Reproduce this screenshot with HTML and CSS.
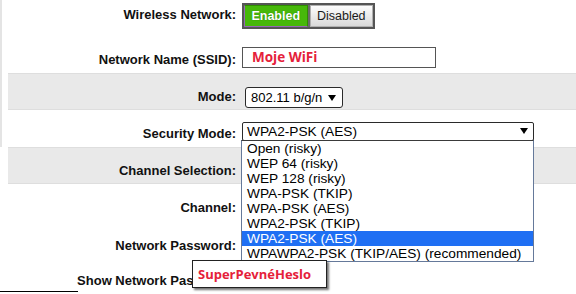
FILE: index.html
```html
<!DOCTYPE html>
<html>
<head>
    <title>Wireless Settings</title>
    <link rel="stylesheet" href="styles.css">
</head>
<body>
    <div class="settings">
        <div class="section">
            <div class="row row-first">
                <label>Wireless Network:</label>
                <div class="toggle">
                    <span class="toggle-on">Enabled</span>
                    <span class="toggle-off">Disabled</span>
                </div>
            </div>
            <div class="row">
                <label>Network Name (SSID):</label>
                <div class="text-field">Moje WiFi</div>
            </div>
            <div class="row shaded">
                <label>Mode:</label>
                <div class="select select-mode">802.11 b/g/n</div>
            </div>
            <div class="row">
                <label>Security Mode:</label>
                <div class="select select-security">
                    WPA2-PSK (AES)
                    <ul class="dropdown">
                        <li>Open (risky)</li>
                        <li>WEP 64 (risky)</li>
                        <li>WEP 128 (risky)</li>
                        <li>WPA-PSK (TKIP)</li>
                        <li>WPA-PSK (AES)</li>
                        <li>WPA2-PSK (TKIP)</li>
                        <li class="selected">WPA2-PSK (AES)</li>
                        <li>WPAWPA2-PSK (TKIP/AES) (recommended)</li>
                    </ul>
                </div>
            </div>
        </div>
        <div class="row shaded">
            <label>Channel Selection:</label>
        </div>
        <div class="row row-tall">
            <label>Channel:</label>
        </div>
        <div class="row row-tall">
            <label>Network Password:</label>
        </div>
        <div class="row row-last">
            <label>Show Network Password:</label>
            <div class="password-callout">SuperPevnéHeslo</div>
        </div>
        <div class="rule"></div>
    </div>
</body>
</html>
```

FILE: styles.css
```css
body {
    margin: 0;
    background: #fff;
    color: #111;
    font-family: "Liberation Sans", Arial, sans-serif;
    font-size: 13px;
    overflow: hidden;
}
.settings {
    width: 576px;
}
.section {
    box-shadow: inset 2px 0 #e4e4e4;
}
.row {
    position: relative;
    display: grid;
    grid-template-columns: 228px 1fr;
    column-gap: 6px;
    align-items: center;
    height: 37px;
    padding: 5px 0 0 8px;
    box-sizing: border-box;
}
.row label {
    text-align: right;
    font-weight: bold;
    padding-top: 4px;
}
.row-first {
    height: 36px;
    padding-top: 3px;
    align-items: start;
}
.row-first label {
    padding-top: 0;
    line-height: 23px;
}
.row-tall {
    height: 38px;
}
.row-last {
    height: 31px;
    padding-top: 5px;
}
.shaded {
    background: #e9e9e9;
    border-top: 1px solid #dedede;
    border-bottom: 1px solid #dedede;
    margin-left: 8px;
    padding-left: 0;
}
.shaded:first-of-type {
    height: 39px;
}
.toggle {
    display: flex;
    width: 133px;
    height: 26px;
    box-sizing: border-box;
    border: 2px solid #555;
    background: #6a6a6a;
    gap: 2px;
    font-size: 12.5px;
}
.toggle span {
    flex: 1;
    display: flex;
    align-items: center;
    justify-content: center;
}
.toggle-on {
    background: #47b80a;
    border: 1px solid #2f8d00;
    border-bottom-color: #9568b3;
    border-left-color: #9568b3;
    color: #fff;
    font-weight: bold;
    text-shadow: 0 0 1px #1d6a00;
}
.toggle-off {
    background: linear-gradient(#fdfdfd, #d9d9d9);
    border: 1px solid #b0b0b0;
    color: #1a1a1a;
}
.text-field {
    width: 194px;
    height: 21px;
    box-sizing: border-box;
    border: 1px solid #555;
    padding-left: 9px;
    font-family: "Open Sans", sans-serif;
    font-weight: bold;
    font-size: 13.5px;
    line-height: 19px;
    color: #e5213a;
}
.select {
    position: relative;
    box-sizing: border-box;
    border: 1px solid #2a2a2a;
    border-radius: 3px;
    background: #fff;
    padding-left: 4px;
    color: #000;
    font-size: 13.7px;
}
.select::after {
    content: "";
    position: absolute;
    right: 6px;
    top: 7px;
    border-left: 4px solid transparent;
    border-right: 4px solid transparent;
    border-top: 6px solid #000;
}
.select-mode {
    margin: 6px 0 0 3px;
    width: 98px;
    height: 21px;
    line-height: 19px;
    padding-left: 5px;
    font-size: 13px;
}
.select-security {
    width: 292px;
    height: 19px;
    line-height: 17px;
    border-radius: 2px;
}
.select-security::after {
    right: 5px;
    top: 5px;
}
.dropdown {
    position: absolute;
    z-index: 2;
    left: -2px;
    top: 17px;
    width: 293px;
    margin: 0;
    padding: 0;
    list-style: none;
    background: #fff;
    border: 1px solid #65799a;
    border-top-color: #3a3a3a;
    box-sizing: border-box;
}
.dropdown li {
    height: 15px;
    line-height: 15px;
    padding-left: 5px;
}
.dropdown li.selected {
    background: #1f6ff3;
    color: #fff;
}
.password-callout {
    position: absolute;
    z-index: 3;
    left: 192px;
    top: 0;
    width: 135px;
    height: 28px;
    box-sizing: border-box;
    border: 1px solid #222;
    background: #fff;
    box-shadow: 2px 2px 2px rgba(0, 0, 0, 0.55);
    padding-left: 5px;
    font-family: "Open Sans", sans-serif;
    font-weight: bold;
    font-size: 13px;
    line-height: 26px;
    color: #e5213a;
}
.rule {
    width: 78px;
    border-top: 1px solid #000;
}
```
